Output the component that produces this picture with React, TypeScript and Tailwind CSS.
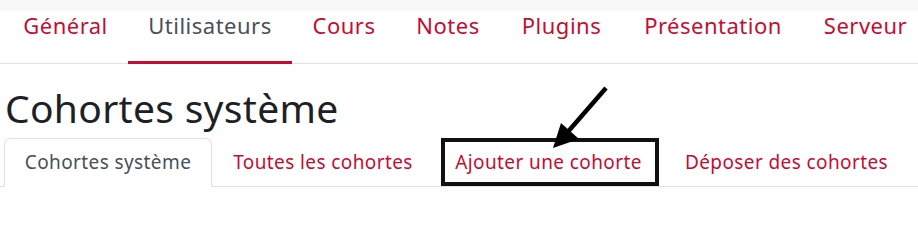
const navItems = [
  { label: "Général", w: "w-[125px]", active: false },
  { label: "Utilisateurs", w: "w-[164px]", active: true },
  { label: "Cours", w: "w-[104px]", active: false },
  { label: "Notes", w: "w-[104px]", active: false },
  { label: "Plugins", w: "w-[123px]", active: false },
  { label: "Présentation", w: "w-[180px]", active: false },
  { label: "Serveur", w: "w-[125px]", active: false },
];

const tabs = [
  { label: "Cohortes système", w: "w-[208px]", active: true },
  { label: "Toutes les cohortes", w: "w-[222px]", active: false },
  { label: "Ajouter une cohorte", w: "w-[229px]", active: false, marked: true },
  { label: "Déposer des cohortes", w: "w-[247px]", active: false },
];

export default function App() {
  return (
    <div
      className="relative w-[918px] h-[226px] overflow-hidden bg-white"
      style={{ fontFamily: '"Noto Sans", "Open Sans", sans-serif' }}
    >
      <div className="h-[11px] bg-[#f8f8f8]" />

      <nav className="flex h-[53px] pl-[3px] border-b border-[#dee2e6] whitespace-nowrap">
        {navItems.map((item) => (
          <div
            key={item.label}
            className={`${item.w} shrink-0 flex items-start justify-center pt-0 text-[22px] leading-[28px] tracking-[0.5px] border-b-[3px] -mb-px ${
              item.active ? "border-[#c60c30] text-[#495057]" : "border-transparent text-[#c60c30]"
            }`}
          >
            {item.label}
          </div>
        ))}
      </nav>

      <h1 className="mt-[20px] pl-[5px] text-[39px] leading-[48px] tracking-[0.3px] text-[#1d2125] whitespace-nowrap">
        Cohortes système
      </h1>

      <div className="mt-[6px] flex pl-[4px] h-[49px] border-b border-[#dee2e6] whitespace-nowrap">
        {tabs.map((tab) => (
          <div
            key={tab.label}
            className={`relative ${tab.w} shrink-0 flex items-center justify-center text-[19px] tracking-[0.4px] -mb-px ${
              tab.active
                ? "bg-white text-[#495057] border border-[#dee2e6] border-b-white rounded-t-[6px]"
                : "text-[#c60c30]"
            }`}
          >
            {tab.label}
            {tab.marked && (
              <span className="absolute left-[7px] right-[4px] top-0 bottom-[1px] border-[4px] border-[#111]" />
            )}
          </div>
        ))}
      </div>

      <svg className="absolute left-0 top-0" width="918" height="226" viewBox="0 0 918 226">
        <line x1="606" y1="88" x2="566" y2="134" stroke="#000" strokeWidth="4.5" />
        <polygon points="553,148 561,123 579,139" fill="#000" />
      </svg>
    </div>
  );
}
